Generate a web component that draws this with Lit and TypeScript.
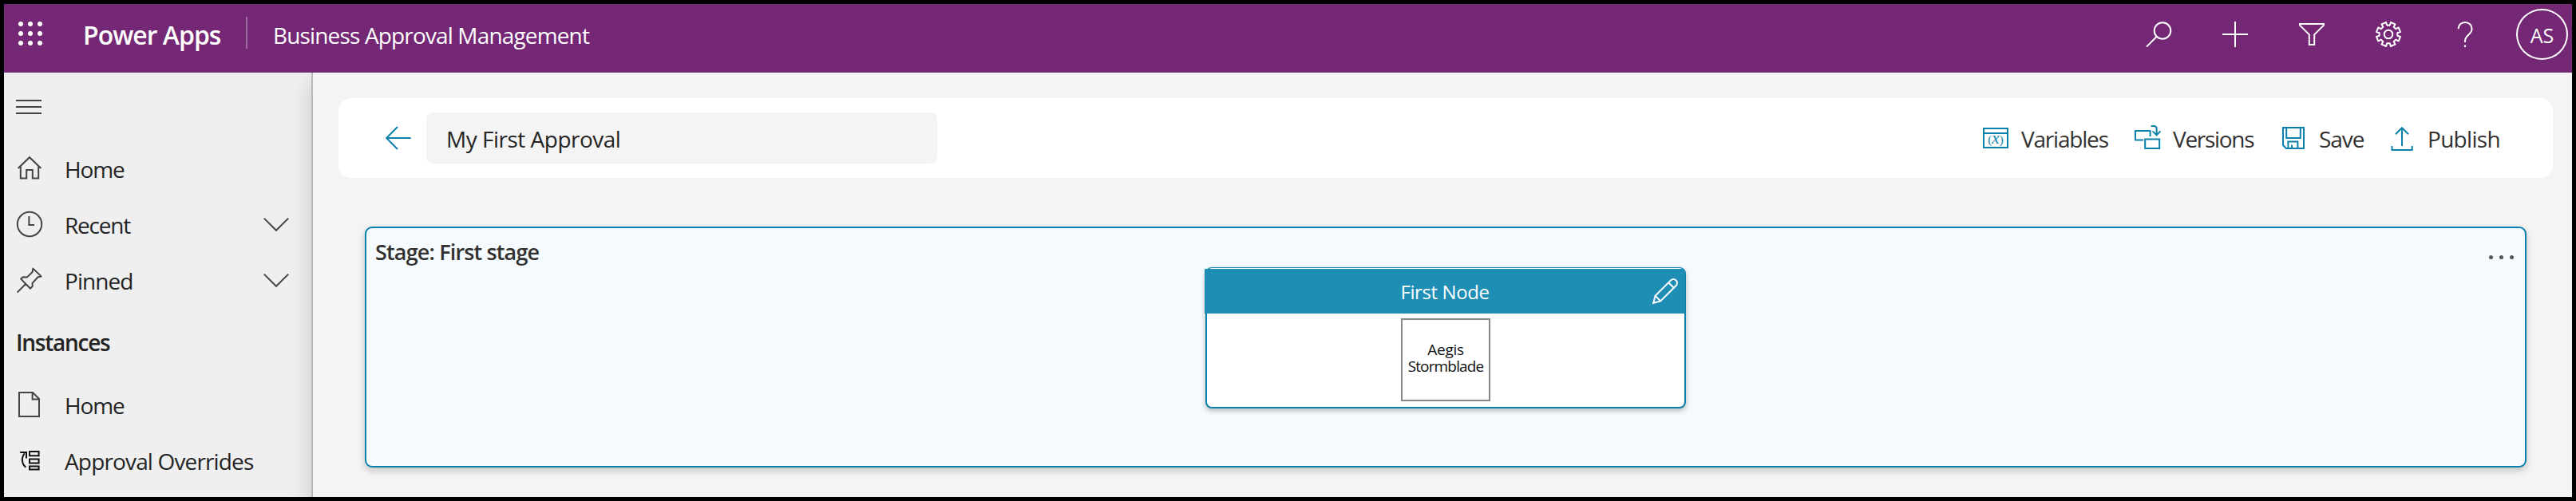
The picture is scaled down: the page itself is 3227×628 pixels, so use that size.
import { LitElement, html, svg, css } from "lit";
import { customElement } from "lit/decorators.js";

// Outline of the settings gear: eight teeth around a 32x32 box.
const gearPoints = (() => {
  const pts: string[] = [];
  const at = (deg: number, r: number) => {
    const a = (deg * Math.PI) / 180;
    pts.push(`${(16 + r * Math.sin(a)).toFixed(2)},${(16 - r * Math.cos(a)).toFixed(2)}`);
  };
  for (let k = 0; k < 8; k++) {
    const c = 22.5 + k * 45;
    at(c - 13.5, 11.4);
    at(c - 11.5, 15.3);
    at(c + 11.5, 15.3);
    at(c + 13.5, 11.4);
  }
  return pts.join(" ");
})();

const glyphs: Record<string, unknown> = {
  search: svg`<circle cx="21" cy="11.5" r="10.3"/><path d="M13.8 18.8 1 31.6"/>`,
  plus: svg`<path d="M16 0v32M0 16h32"/>`,
  filter: svg`<path d="M1 3h30v1.6L19.2 16.4V29h-6.4V16.4L1 4.6z"/>`,
  gear: svg`<polygon points="${gearPoints}" stroke-linejoin="round"/><circle cx="16" cy="16" r="5.3"/>`,
  help: svg`<path d="M7.5 9.2C7.5 4.5 11.3 1 16.1 1s8.5 3.4 8.5 8.2c0 6.8-8.6 8.4-8.6 15v1.8M16 29.6v2.4"/>`,
  home: svg`<path d="M1.6 16 16 2.2 30.4 16M4.8 13v15.6h7.4V18h7.6v10.6h7.4V13"/>`,
  clock: svg`<circle cx="16" cy="16" r="15.2"/><path d="M15.4 6v11H22"/>`,
  pin: svg`<path d="M.6 31.6 11.4 20.8M20.4 1.6 30.6 11.4l-4 .9-7 7.6.1 3.900-2.600 2.900L5.200 14.600l2.600-2.400 5.200.2 6.600-6.400z" stroke-linejoin="round"/>`,
  page: svg`<path d="M3 1h17l8 8v22H3zM19.6 1v8.4H28"/>`,
  overrides: svg`<path d="M16 5h11.6v5.2H16zM16 14.600h11.600v4.800H16zM16 23.400h11.600v4.200H16z"/><path d="M11.400 24.800C6 20.500 5.400 12.500 9.800 7.400M4.200 6h7.800v7.600"/>`,
  chevron: svg`<path d="M.8 8.6 16 23.8 31.2 8.6"/>`,
  back: svg`<path d="M31.5 16H1.4M15 2 1.2 16 15 30"/>`,
  variables: svg`<path d="M1 4h30v24H1zM1 10h30"/><text x="16" y="23.4" text-anchor="middle">(<tspan font-style="italic" font-size="21">x</tspan>)</text>`,
  versions: svg`<path d="M11 18.500H1V7h18.600v7M13.200 17.400h18V29h-18zM20.600 1H24c2 0 3.600 1.400 3.600 3.400v7.200M22.600 7.400l5 5 4.800-5"/>`,
  save: svg`<path d="M3 3h26v26H7l-4-4zM7.200 3v13h17.600V3M9.400 29v-8.400h12V29M14 24.600V29"/>`,
  publish: svg`<path d="M16 26V3M8 11.200l8-8 8 8M3.500 26v5h25.200v-5"/>`,
  pencil: svg`<path d="M1.200 30.800 3.600 21.800 23 2.400a4.600 4.600 0 0 1 6.600 6.600L10.200 28.400zM3.600 21.800l6.600 6.600M20.200 5.200l6.600 6.600"/>`,
};

const icon = (name: string) => html`<svg class="icon ${name}" viewBox="0 0 32 32">${glyphs[name]}</svg>`;

const nav = [
  { icon: "home", label: "Home", cls: "t-home" },
  { icon: "clock", label: "Recent", cls: "t-recent", more: true },
  { icon: "pin", label: "Pinned", cls: "t-pinned", more: true },
];
const instances = [
  { icon: "page", label: "Home", cls: "t-home" },
  { icon: "overrides", label: "Approval Overrides", cls: "t-over" },
];
const actions = [
  { icon: "variables", label: "Variables" },
  { icon: "versions", label: "Versions" },
  { icon: "save", label: "Save" },
  { icon: "publish", label: "Publish" },
];

@customElement("app-root")
export class AppRoot extends LitElement {
  static styles = css`
    :host {
      display: block;
      font-family: "Open Sans", "Noto Sans", sans-serif;
      font-size: 28px;
      color: #242424;
    }
    * { box-sizing: border-box; }
    .icon {
      width: 32px;
      height: 32px;
      flex: none;
      fill: none;
      stroke: currentColor;
      stroke-width: 2;
      overflow: visible;
    }
    .frame {
      height: 628px;
      border: 5px solid #000;
      display: flex;
      flex-direction: column;
      overflow: hidden;
      background: #f4f4f4;
      white-space: nowrap;
    }
    header {
      height: 86px;
      flex: none;
      padding: 0 5px 10px 18px;
      display: flex;
      align-items: center;
      background: #742774;
      color: #fff;
      z-index: 1;
    }
    .waffle {
      display: grid;
      grid-template-columns: repeat(3, 6px);
      gap: 6px;
      margin-top: -2px;
    }
    .waffle i { width: 6px; height: 6px; border-radius: 50%; background: #fff; }
    .product {
      width: 204px;
      margin-left: 51px;
      padding-top: 1px;
      font-size: 32px;
      font-weight: 600;
      letter-spacing: -1px;
    }
    .rule { width: 2px; height: 40px; margin-top: -4px; background: #9d6a9d; }
    .app { margin-left: 32px; padding-top: 2px; letter-spacing: -0.85px; flex: 1; }
    .tools { display: flex; gap: 64px; align-items: center; }
    .avatar {
      width: 65px;
      height: 64px;
      margin-left: 48px;
      border: 2px solid #fff;
      border-radius: 50%;
      display: flex;
      align-items: center;
      justify-content: center;
      font-size: 25px;
      padding-top: 2px;
    }
    .body { flex: 1; display: flex; min-height: 0; }
    aside { width: 385px; flex: none; background: #efefef; color: #242424; }
    .burger {
      height: 85px;
      padding-left: 15px;
      display: flex;
      flex-direction: column;
      justify-content: center;
      gap: 6px;
    }
    .burger i { width: 32px; height: 2px; background: #444; }
    .item {
      height: 70px;
      padding: 0 28px 0 16px;
      display: flex;
      align-items: center;
    }
    .item .icon { color: #444; }
    .item .overrides { color: #111; }
    .item span { flex: 1; margin-left: 28px; padding-top: 1px; }
    .t-home { letter-spacing: -1.1px; }
    .t-recent { letter-spacing: -1.2px; }
    .t-pinned { letter-spacing: -0.95px; }
    .t-over { letter-spacing: -0.85px; }
    .group {
      height: 86px;
      line-height: 87px;
      padding-left: 15px;
      font-weight: 600;
      letter-spacing: -1.26px;
    }
    main {
      flex: 1;
      border-left: 2px solid #b9b9b9;
      background: #f4f4f4;
      padding: 32px 24px 0 32px;
      box-shadow: 0 14px 26px rgba(0, 0, 0, 0.17);
    }
    .bar {
      height: 100px;
      border-radius: 16px;
      background: #fff;
      display: flex;
      align-items: center;
      padding-left: 59px;
    }
    .back { display: flex; }
    .back, .actions .icon { color: #0b80ab; }
    .name {
      width: 640px;
      height: 64px;
      margin-left: 19px;
      padding-left: 25px;
      line-height: 66px;
      border-radius: 8px;
      background: #f4f4f4;
      letter-spacing: -0.5px;
    }
    .actions {
      margin-left: auto;
      display: grid;
      grid-template-columns: 190px 183px 136px 205px;
      color: #323130;
    }
    .action { display: flex; align-items: center; gap: 16px; }
    .action span { padding-top: 1px; }
    .icon text { font: 15px "Liberation Serif", serif; fill: currentColor; stroke: none; }
    .l-variables { letter-spacing: -1.2px; }
    .l-versions { letter-spacing: -1.3px; }
    .l-save { letter-spacing: -1.07px; }
    .l-publish { letter-spacing: -0.7px; }
    .stage {
      height: 302px;
      margin: 61px 33px 0;
      border: 2px solid #0b80ab;
      border-radius: 9px;
      background: #f4fafd;
      box-shadow: 0 4px 10px rgba(0, 0, 0, 0.2);
    }
    .stage-head {
      height: 49px;
      padding: 10px 14px 0 11px;
      display: flex;
      justify-content: space-between;
      font-size: 27px;
      line-height: 40px;
      font-weight: 600;
      letter-spacing: -0.85px;
      color: #323130;
    }
    .dots { display: flex; gap: 8px; padding-top: 24px; }
    .dots i { width: 5px; height: 5px; border-radius: 50%; background: #555; }
    .node {
      width: 602px;
      height: 177px;
      margin: 0 auto;
      border: 2px solid #0b80ab;
      border-top-width: 1px;
      border-radius: 8px;
      background: #fff;
      box-shadow: 0 3px 6px rgba(0, 0, 0, 0.25);
    }
    .node-head {
      height: 56px;
      margin: 1px -1px 0 -3px;
      display: grid;
      grid-template-columns: 1fr auto 1fr;
      align-items: center;
      padding: 0 9px 0 9px;
      border-radius: 0 4px 0 0;
      background: #1f8eb5;
      color: #fff;
      font-size: 24px;
      letter-spacing: -0.4px;
    }
    .node-head span { grid-column: 2; padding-top: 1px; }
    .node-head .icon { justify-self: end; }
    .person {
      width: 112px;
      height: 104px;
      margin: 6px auto 0;
      padding-bottom: 4px;
      border: 2px solid #878787;
      display: flex;
      flex-direction: column;
      align-items: center;
      justify-content: center;
      font-size: 19px;
      line-height: 21.5px;
      letter-spacing: -0.85px;
      color: #111;
    }
    .person .first { letter-spacing: -0.3px; }
  `;

  private row(i: { icon: string; label: string; cls: string; more?: boolean }) {
    return html`<div class="item">
      ${icon(i.icon)}<span class=${i.cls}>${i.label}</span>${i.more ? icon("chevron") : null}
    </div>`;
  }

  render() {
    return html`<div class="frame">
      <header>
        <div class="waffle">${Array.from({ length: 9 }, () => html`<i></i>`)}</div>
        <div class="product">Power Apps</div>
        <div class="rule"></div>
        <div class="app">Business Approval Management</div>
        <div class="tools">${["search", "plus", "filter", "gear", "help"].map(icon)}</div>
        <div class="avatar">AS</div>
      </header>
      <div class="body">
        <aside>
          <div class="burger"><i></i><i></i><i></i></div>
          ${nav.map((i) => this.row(i))}
          <div class="group">Instances</div>
          ${instances.map((i) => this.row(i))}
        </aside>
        <main>
          <div class="bar">
            <div class="back">${icon("back")}</div>
            <div class="name">My First Approval</div>
            <div class="actions">
              ${actions.map(
                (a) => html`<div class="action">${icon(a.icon)}<span class="l-${a.icon}">${a.label}</span></div>`
              )}
            </div>
          </div>
          <section class="stage">
            <div class="stage-head">
              <span>Stage: First stage</span>
              <div class="dots"><i></i><i></i><i></i></div>
            </div>
            <div class="node">
              <div class="node-head"><span>First Node</span>${icon("pencil")}</div>
              <div class="person"><span class="first">Aegis</span><span>Stormblade</span></div>
            </div>
          </section>
        </main>
      </div>
    </div>`;
  }
}
